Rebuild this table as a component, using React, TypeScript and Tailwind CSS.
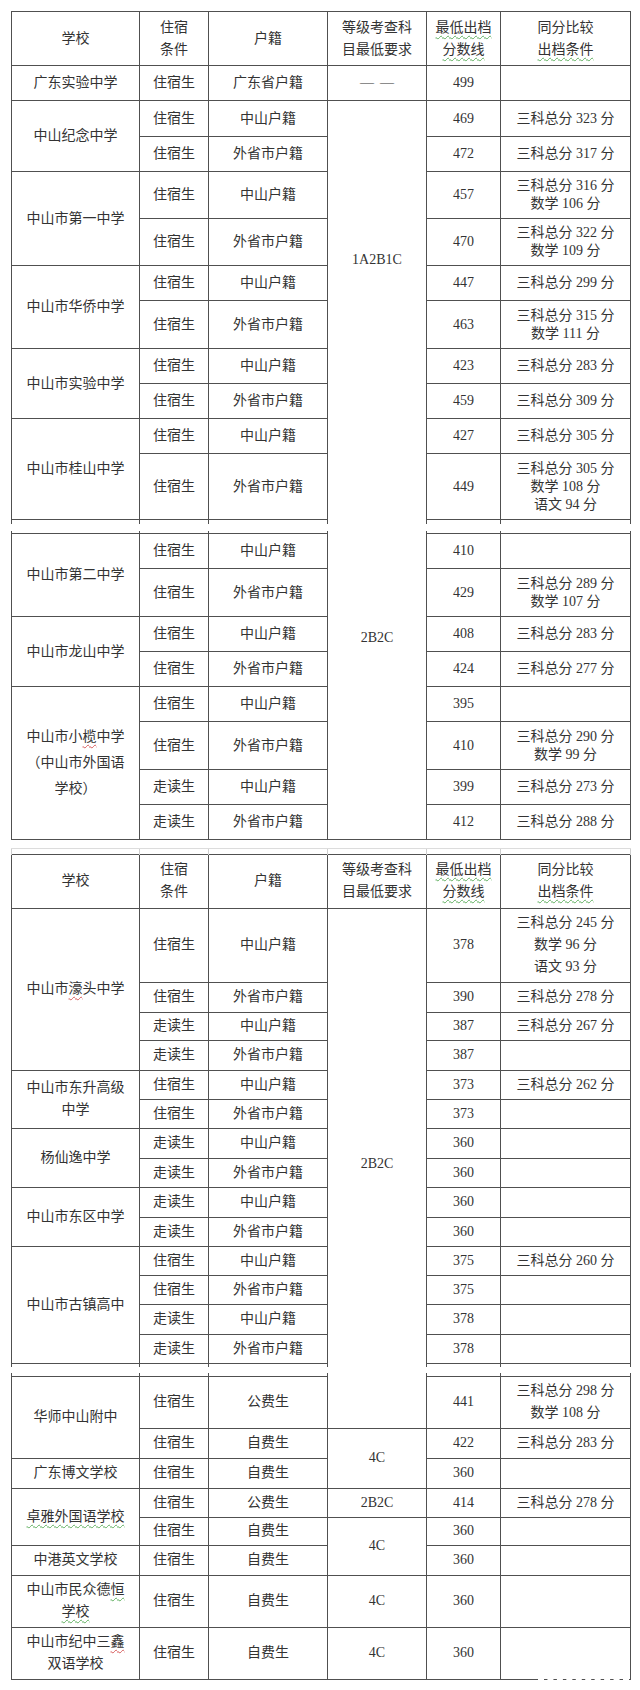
import type { ReactNode } from "react";

/* ── Types ─────────────────────────────────────────────── */

type Row = {
  h: string;
  school?: { text: ReactNode; span: number; cls?: string };
  stay: string;
  hukou: string;
  rating?: { text?: ReactNode; span: number; cls?: string };
  score: string;
  note?: string[];
};

const td = "border border-[#505050] p-0 text-center";
const green = "underline decoration-wavy decoration-[#5fae5f] decoration-1 underline-offset-[3px]";
const red = "underline decoration-wavy decoration-[#d65a5a] decoration-1 underline-offset-[3px]";

/* ── Data ──────────────────────────────────────────────── */

const part1: Row[] = [
  {
    h: "h-[35px]",
    school: { text: "广东实验中学", span: 1 },
    stay: "住宿生",
    hukou: "广东省户籍",
    rating: {
      text: (
        <span>
          —<span className="inline-block w-[6px]" />—
        </span>
      ),
      span: 1,
    },
    score: "499",
  },
  {
    h: "h-[36px]",
    school: { text: "中山纪念中学", span: 2 },
    stay: "住宿生",
    hukou: "中山户籍",
    rating: { text: "1A2B1C", span: 8, cls: "border-b-0" },
    score: "469",
    note: ["三科总分 323 分"],
  },
  { h: "h-[35px]", stay: "住宿生", hukou: "外省市户籍", score: "472", note: ["三科总分 317 分"] },
  {
    h: "h-[47px]",
    school: { text: "中山市第一中学", span: 2 },
    stay: "住宿生",
    hukou: "中山户籍",
    score: "457",
    note: ["三科总分 316 分", "数学 106 分"],
  },
  { h: "h-[47px]", stay: "住宿生", hukou: "外省市户籍", score: "470", note: ["三科总分 322 分", "数学 109 分"] },
  {
    h: "h-[35px]",
    school: { text: "中山市华侨中学", span: 2 },
    stay: "住宿生",
    hukou: "中山户籍",
    score: "447",
    note: ["三科总分 299 分"],
  },
  { h: "h-[48px]", stay: "住宿生", hukou: "外省市户籍", score: "463", note: ["三科总分 315 分", "数学 111 分"] },
  {
    h: "h-[35px]",
    school: { text: "中山市实验中学", span: 2 },
    stay: "住宿生",
    hukou: "中山户籍",
    score: "423",
    note: ["三科总分 283 分"],
  },
  { h: "h-[35px]", stay: "住宿生", hukou: "外省市户籍", score: "459", note: ["三科总分 309 分"] },
  {
    h: "h-[35px]",
    school: { text: "中山市桂山中学", span: 2 },
    stay: "住宿生",
    hukou: "中山户籍",
    rating: { span: 2, cls: "border-t-0 border-b-0" },
    score: "427",
    note: ["三科总分 305 分"],
  },
  {
    h: "h-[66px]",
    stay: "住宿生",
    hukou: "外省市户籍",
    score: "449",
    note: ["三科总分 305 分", "数学 108 分", "语文 94 分"],
  },
];

const part2: Row[] = [
  {
    h: "h-[35px]",
    school: { text: "中山市第二中学", span: 2 },
    stay: "住宿生",
    hukou: "中山户籍",
    rating: { text: "2B2C", span: 8, cls: "border-t-0 align-top pt-[95px]" },
    score: "410",
  },
  { h: "h-[48px]", stay: "住宿生", hukou: "外省市户籍", score: "429", note: ["三科总分 289 分", "数学 107 分"] },
  {
    h: "h-[35px]",
    school: { text: "中山市龙山中学", span: 2 },
    stay: "住宿生",
    hukou: "中山户籍",
    score: "408",
    note: ["三科总分 283 分"],
  },
  { h: "h-[35px]", stay: "住宿生", hukou: "外省市户籍", score: "424", note: ["三科总分 277 分"] },
  {
    h: "h-[35px]",
    school: {
      text: (
        <div className="leading-[26px]">
          中山市小<span className={red}>榄</span>中学
          <br />
          （中山市外国语
          <br />
          学校）
        </div>
      ),
      span: 4,
    },
    stay: "住宿生",
    hukou: "中山户籍",
    score: "395",
  },
  { h: "h-[48px]", stay: "住宿生", hukou: "外省市户籍", score: "410", note: ["三科总分 290 分", "数学 99 分"] },
  { h: "h-[35px]", stay: "走读生", hukou: "中山户籍", score: "399", note: ["三科总分 273 分"] },
  { h: "h-[35px]", stay: "走读生", hukou: "外省市户籍", score: "412", note: ["三科总分 288 分"] },
];

const part3: Row[] = [
  {
    h: "h-[74px]",
    school: {
      text: (
        <span>
          中山市<span className={red}>濠</span>头中学
        </span>
      ),
      span: 4,
    },
    stay: "住宿生",
    hukou: "中山户籍",
    rating: { text: "2B2C", span: 14, cls: "border-b-0 align-top pt-[246px]" },
    score: "378",
    note: ["三科总分 245 分", "数学 96 分", "语文 93 分"],
  },
  { h: "h-[30px]", stay: "住宿生", hukou: "外省市户籍", score: "390", note: ["三科总分 278 分"] },
  { h: "h-[28px]", stay: "走读生", hukou: "中山户籍", score: "387", note: ["三科总分 267 分"] },
  { h: "h-[30px]", stay: "走读生", hukou: "外省市户籍", score: "387" },
  {
    h: "h-[29px]",
    school: {
      text: (
        <div className="leading-[22px]">
          中山市东升高级
          <br />
          中学
        </div>
      ),
      span: 2,
    },
    stay: "住宿生",
    hukou: "中山户籍",
    score: "373",
    note: ["三科总分 262 分"],
  },
  { h: "h-[29px]", stay: "住宿生", hukou: "外省市户籍", score: "373" },
  { h: "h-[30px]", school: { text: "杨仙逸中学", span: 2 }, stay: "走读生", hukou: "中山户籍", score: "360" },
  { h: "h-[29px]", stay: "走读生", hukou: "外省市户籍", score: "360" },
  { h: "h-[30px]", school: { text: "中山市东区中学", span: 2 }, stay: "走读生", hukou: "中山户籍", score: "360" },
  { h: "h-[29px]", stay: "走读生", hukou: "外省市户籍", score: "360" },
  {
    h: "h-[29px]",
    school: { text: "中山市古镇高中", span: 4 },
    stay: "住宿生",
    hukou: "中山户籍",
    score: "375",
    note: ["三科总分 260 分"],
  },
  { h: "h-[29px]", stay: "住宿生", hukou: "外省市户籍", score: "375" },
  { h: "h-[30px]", stay: "走读生", hukou: "中山户籍", score: "378" },
  { h: "h-[29px]", stay: "走读生", hukou: "外省市户籍", score: "378" },
];

const part4: Row[] = [
  {
    h: "h-[52px]",
    school: { text: "华师中山附中", span: 2 },
    stay: "住宿生",
    hukou: "公费生",
    rating: { span: 1, cls: "border-t-0" },
    score: "441",
    note: ["三科总分 298 分", "数学 108 分"],
  },
  {
    h: "h-[30px]",
    stay: "住宿生",
    hukou: "自费生",
    rating: { text: "4C", span: 2 },
    score: "422",
    note: ["三科总分 283 分"],
  },
  { h: "h-[30px]", school: { text: "广东博文学校", span: 1 }, stay: "住宿生", hukou: "自费生", score: "360" },
  {
    h: "h-[29px]",
    school: { text: <span className={green}>卓雅外国语学校</span>, span: 2 },
    stay: "住宿生",
    hukou: "公费生",
    rating: { text: "2B2C", span: 1 },
    score: "414",
    note: ["三科总分 278 分"],
  },
  { h: "h-[28px]", stay: "住宿生", hukou: "自费生", rating: { text: "4C", span: 2 }, score: "360" },
  { h: "h-[30px]", school: { text: "中港英文学校", span: 1 }, stay: "住宿生", hukou: "自费生", score: "360" },
  {
    h: "h-[52px]",
    school: {
      text: (
        <div className="leading-[22px]">
          中山市民众德<span className={green}>恒</span>
          <br />
          <span className={green}>学校</span>
        </div>
      ),
      span: 1,
    },
    stay: "住宿生",
    hukou: "自费生",
    rating: { text: "4C", span: 1 },
    score: "360",
  },
  {
    h: "h-[52px]",
    school: {
      text: (
        <div className="leading-[22px]">
          中山市纪中三<span className={red}>鑫</span>
          <br />
          双语学校
        </div>
      ),
      span: 1,
    },
    stay: "住宿生",
    hukou: "自费生",
    rating: { text: "4C", span: 1 },
    score: "360",
  },
];

/* ── Table pieces ──────────────────────────────────────── */

function Stub({ h, light }: { h: string; light?: boolean }) {
  const c = light ? "border-x border-[#cfcfcf] p-0" : "border-x border-[#505050] p-0";
  return (
    <tr className={h}>
      <td className={c} />
      <td className={c} />
      <td className={c} />
      <td className={c} />
      <td className={c} />
      <td className={c} />
    </tr>
  );
}

function Header() {
  return (
    <tr className="h-[54px]">
      <td className={td}>学校</td>
      <td className={td}>
        <div className="leading-[22px]">
          住宿
          <br />
          条件
        </div>
      </td>
      <td className={td}>户籍</td>
      <td className={td}>
        <div className="leading-[22px]">
          等级考查科
          <br />
          目最低要求
        </div>
      </td>
      <td className={td}>
        <div className="leading-[22px]">
          <span className={green}>最低出档</span>
          <br />
          <span className={green}>分数线</span>
        </div>
      </td>
      <td className={td}>
        <div className="leading-[22px]">
          同分比较
          <br />
          <span className={green}>出档条件</span>
        </div>
      </td>
    </tr>
  );
}

function Part({
  rows,
  header,
  noteLead,
  stubTop,
  stubBottom,
  lightTop,
}: {
  rows: Row[];
  header?: boolean;
  noteLead: string;
  stubTop?: string;
  stubBottom?: string;
  lightTop?: boolean;
}) {
  return (
    <table className="table-fixed border-collapse w-[619px]">
      <colgroup>
        <col className="w-[128px]" />
        <col className="w-[69px]" />
        <col className="w-[119px]" />
        <col className="w-[99px]" />
        <col className="w-[74px]" />
        <col className="w-[130px]" />
      </colgroup>
      <tbody>
        {stubTop && <Stub h={stubTop} light={lightTop} />}
        {header && <Header />}
        {rows.map((r, i) => (
          <tr key={i} className={r.h}>
            {r.school && (
              <td rowSpan={r.school.span} className={`${td} ${r.school.cls ?? ""}`}>
                {r.school.text}
              </td>
            )}
            <td className={td}>{r.stay}</td>
            <td className={td}>{r.hukou}</td>
            {r.rating && (
              <td rowSpan={r.rating.span} className={`${td} ${r.rating.cls ?? ""}`}>
                {r.rating.text}
              </td>
            )}
            <td className={td}>{r.score}</td>
            <td className={td}>
              <div className={noteLead}>
                {r.note?.map((n) => (
                  <div key={n}>{n}</div>
                ))}
              </div>
            </td>
          </tr>
        ))}
        {stubBottom && <Stub h={stubBottom} />}
      </tbody>
    </table>
  );
}

/* ── Page ──────────────────────────────────────────────── */

export default function App() {
  return (
    <div className="w-[640px] h-[1690px] bg-white pt-[11px] pl-[11px] font-['Liberation_Serif','Noto_Sans_CJK_SC',serif] text-[14px] leading-[18px] text-[#333]">
      <Part rows={part1} header noteLead="leading-[18px]" stubBottom="h-[4px]" />
      <div className="h-[7px]" />
      <Part rows={part2} noteLead="leading-[18px]" stubTop="h-[3px]" />

      <div className="h-[8px]" />
      <div className="h-px w-[620px] bg-[#dcdcdc]" />

      <Part rows={part3} header noteLead="leading-[22px]" stubTop="h-[5px]" lightTop stubBottom="h-[4px]" />
      <div className="h-[6px]" />
      <div className="relative w-fit">
        <Part rows={part4} noteLead="leading-[22px]" stubTop="h-[3px]" />
        <div className="absolute left-[527px] bottom-[-1px] w-[91px] border-t-2 border-dashed border-white" />
      </div>
    </div>
  );
}
